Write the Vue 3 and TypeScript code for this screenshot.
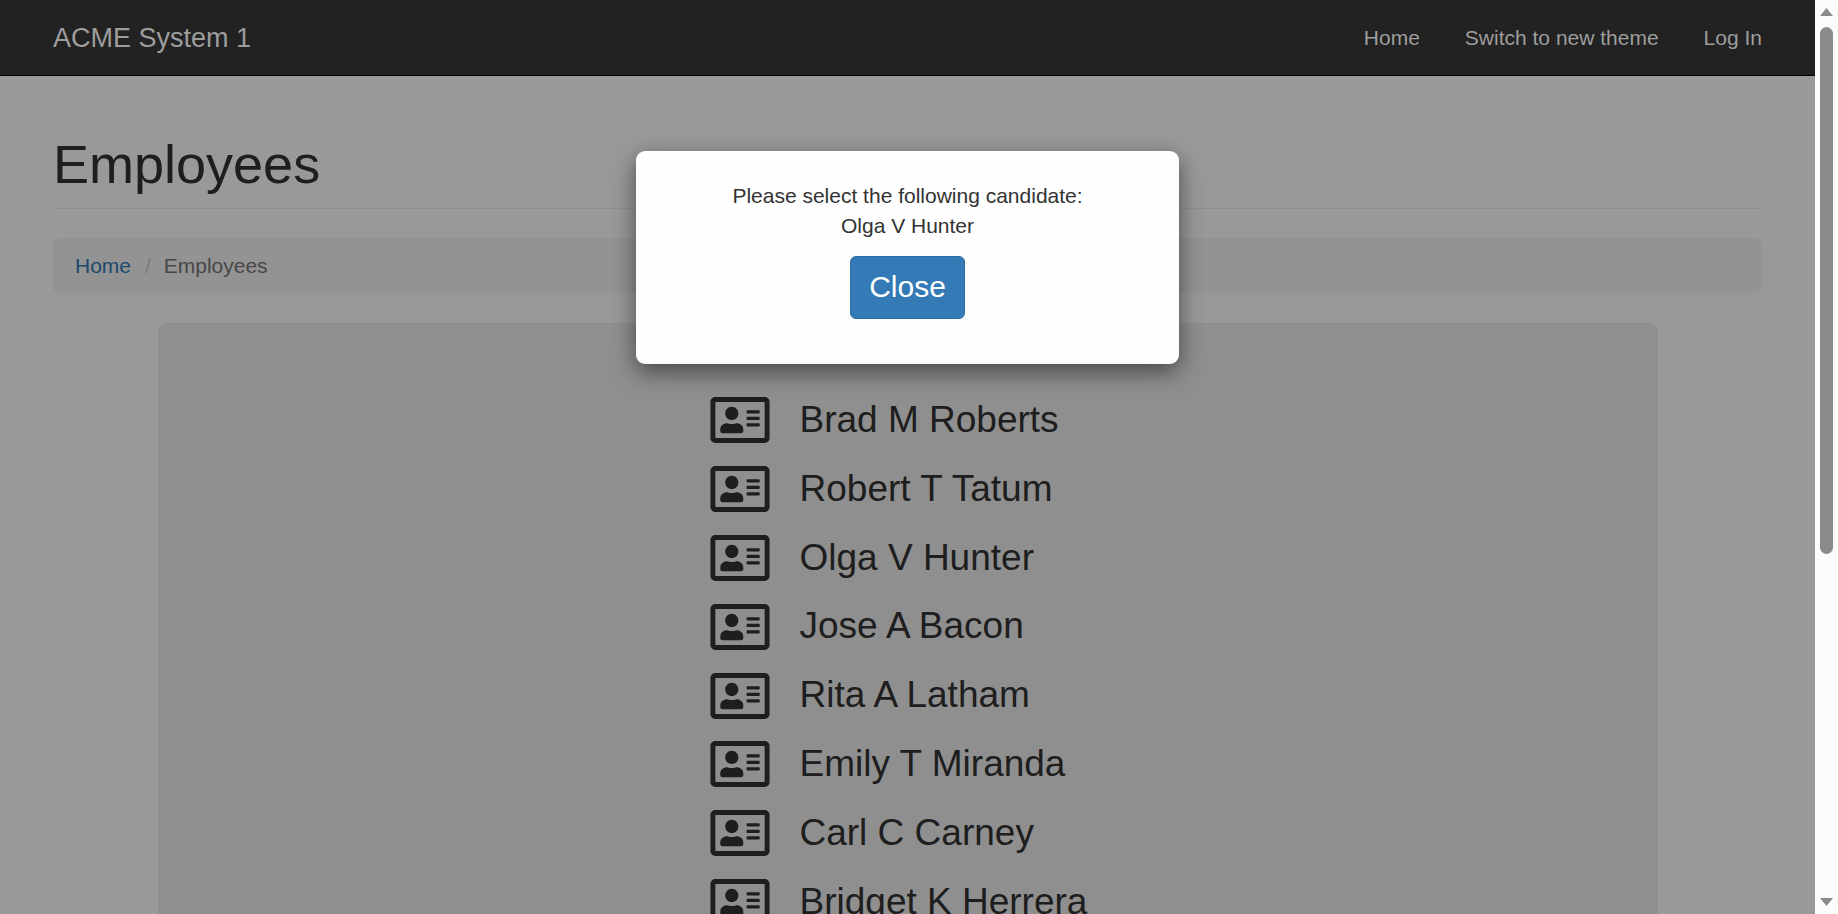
<script setup lang="ts">
import { ref } from 'vue'

interface NavLink {
  label: string
  href: string
}

const navLinks: NavLink[] = [
  { label: 'Home', href: '#home' },
  { label: 'Switch to new theme', href: '#theme' },
  { label: 'Log In', href: '#login' },
]

const employees: string[] = [
  'Brad M Roberts',
  'Robert T Tatum',
  'Olga V Hunter',
  'Jose A Bacon',
  'Rita A Latham',
  'Emily T Miranda',
  'Carl C Carney',
  'Bridget K Herrera',
]

const candidate = employees[2]
const dialogOpen = ref(true)
</script>

<template>
  <div class="window">
    <div class="page">
      <header class="navbar">
        <a class="brand" href="#top">ACME System 1</a>
        <nav class="nav">
          <a v-for="link in navLinks" :key="link.label" :href="link.href">{{ link.label }}</a>
        </nav>
      </header>

      <div class="body">
        <main class="content">
          <div class="page-header">
            <h1>Employees</h1>
          </div>

          <ol class="breadcrumb">
            <li><a href="#home">Home</a></li>
            <li class="current">Employees</li>
          </ol>

          <section class="panel">
            <ul class="employees">
              <li v-for="name in employees" :key="name">
                <svg class="card-icon" viewBox="0 32 576 448" aria-hidden="true">
                  <path
                    d="M528 32H48C21.5 32 0 53.5 0 80v352c0 26.5 21.5 48 48 48h480c26.5 0 48-21.5 48-48V80c0-26.5-21.5-48-48-48zm0 400H48V80h480v352zM208 256c35.3 0 64-28.7 64-64s-28.7-64-64-64-64 28.7-64 64 28.7 64 64 64zm-89.6 128h179.2c12.4 0 22.4-8.6 22.4-19.2v-19.2c0-31.8-30.1-57.6-67.2-57.6-10.8 0-18.7 8-44.8 8-26.9 0-33.4-8-44.8-8-37.1 0-67.2 25.8-67.2 57.6v19.2c0 10.6 10 19.2 22.4 19.2zM360 320h112c4.4 0 8-3.6 8-8v-16c0-4.4-3.6-8-8-8H360c-4.4 0-8 3.6-8 8v16c0 4.4 3.6 8 8 8zm0-64h112c4.4 0 8-3.6 8-8v-16c0-4.4-3.6-8-8-8H360c-4.4 0-8 3.6-8 8v16c0 4.4 3.6 8 8 8zm0-64h112c4.4 0 8-3.6 8-8v-16c0-4.4-3.6-8-8-8H360c-4.4 0-8 3.6-8 8v16c0 4.4 3.6 8 8 8z"
                  />
                </svg>
                <span>{{ name }}</span>
              </li>
            </ul>
          </section>
        </main>

        <div v-if="dialogOpen" class="backdrop">
          <div class="dialog" role="dialog" aria-modal="true" aria-labelledby="dialog-text">
            <p id="dialog-text">Please select the following candidate:<br />{{ candidate }}</p>
            <button type="button" @click="dialogOpen = false">Close</button>
          </div>
        </div>
      </div>
    </div>

    <div class="scrollbar" aria-hidden="true">
      <svg class="arrow" viewBox="0 0 13 8"><path d="M6.500 0 13 8H0z" /></svg>
      <div class="track"><div class="thumb"></div></div>
      <svg class="arrow" viewBox="0 0 13 8"><path d="M0 0H13L6.500 8z" /></svg>
    </div>
  </div>
</template>

<style>
body {
  margin: 0;
  overflow: hidden;
}
</style>

<style scoped>
.window {
  display: flex;
  height: 100vh;
  overflow: hidden;
  background: #fff;
  color: #333;
  font-family: 'Liberation Sans', Arial, Helvetica, sans-serif;
  font-size: 21px;
  line-height: 30px;
}

.page {
  flex: 1;
  min-width: 0;
  display: flex;
  flex-direction: column;
}

.navbar {
  display: flex;
  flex: none;
  align-items: center;
  justify-content: space-between;
  padding: 23px 53px 22px;
  background: #222;
  border-bottom: 1px solid #000;
}

.navbar a {
  color: #9d9d9d;
  text-decoration: none;
}

.brand {
  font-size: 27px;
}

.nav {
  display: flex;
  gap: 45px;
}

.body {
  position: relative;
  flex: 1;
  min-height: 0;
  overflow: hidden;
}

.content {
  padding: 59px 53px 0;
}

.page-header {
  padding-bottom: 15px;
  margin-bottom: 29px;
  border-bottom: 1px solid #eee;
}

h1 {
  margin: 0;
  font-size: 54px;
  font-weight: 400;
  line-height: 58px;
}

.breadcrumb {
  display: flex;
  margin: 0 0 30px;
  padding: 13px 22px 12px;
  list-style: none;
  background: #f5f5f5;
  border-radius: 6px;
}

.breadcrumb a {
  color: #337ab7;
  text-decoration: none;
}

.breadcrumb .current {
  color: #777;
}

.breadcrumb .current::before {
  content: '/\00a0';
  padding: 0 7px 0 14px;
  color: #ccc;
}

.panel {
  max-width: 1500px;
  margin: 0 auto;
  padding: 63px 0;
  box-sizing: border-box;
  background: #eee;
  border-radius: 9px;
}

.employees {
  width: 396px;
  margin: 0 auto;
  padding: 0;
  list-style: none;
  font-size: 37px;
  line-height: 1.86;
}

.employees li {
  display: flex;
  align-items: center;
  gap: 30px;
  white-space: nowrap;
}

.card-icon {
  flex: none;
  width: 60px;
  height: 46px;
  fill: #333;
}

.backdrop {
  position: absolute;
  inset: 0;
  display: flex;
  align-items: flex-start;
  justify-content: center;
  padding-top: 75px;
  background: rgba(0, 0, 0, 0.4);
}

.dialog {
  display: flex;
  flex-direction: column;
  align-items: center;
  gap: 15px;
  width: 30%;
  max-width: 543px;
  padding: 30px 30px 45px;
  box-sizing: border-box;
  background: #fefefe;
  border-radius: 9px;
  box-shadow: 0 8px 23px rgba(0, 0, 0, 0.5);
  text-align: center;
}

.dialog p {
  margin: 0;
}

.dialog button {
  padding: 8px 18px 10px;
  border: 1px solid #2e6da4;
  border-radius: 6px;
  background: #337ab7;
  color: #fff;
  font: inherit;
  font-size: 30px;
  line-height: 43px;
  cursor: pointer;
}

.scrollbar {
  display: flex;
  flex: none;
  flex-direction: column;
  align-items: center;
  gap: 11px;
  width: 23px;
  padding: 8px 0;
  box-sizing: border-box;
  background: #fcfcfc;
}

.arrow {
  flex: none;
  width: 13px;
  height: 8px;
  fill: #8b8b8b;
}

.track {
  flex: 1;
  width: 13px;
}

.thumb {
  height: 61.3%;
  border-radius: 7px;
  background: #8b8b8b;
}
</style>
